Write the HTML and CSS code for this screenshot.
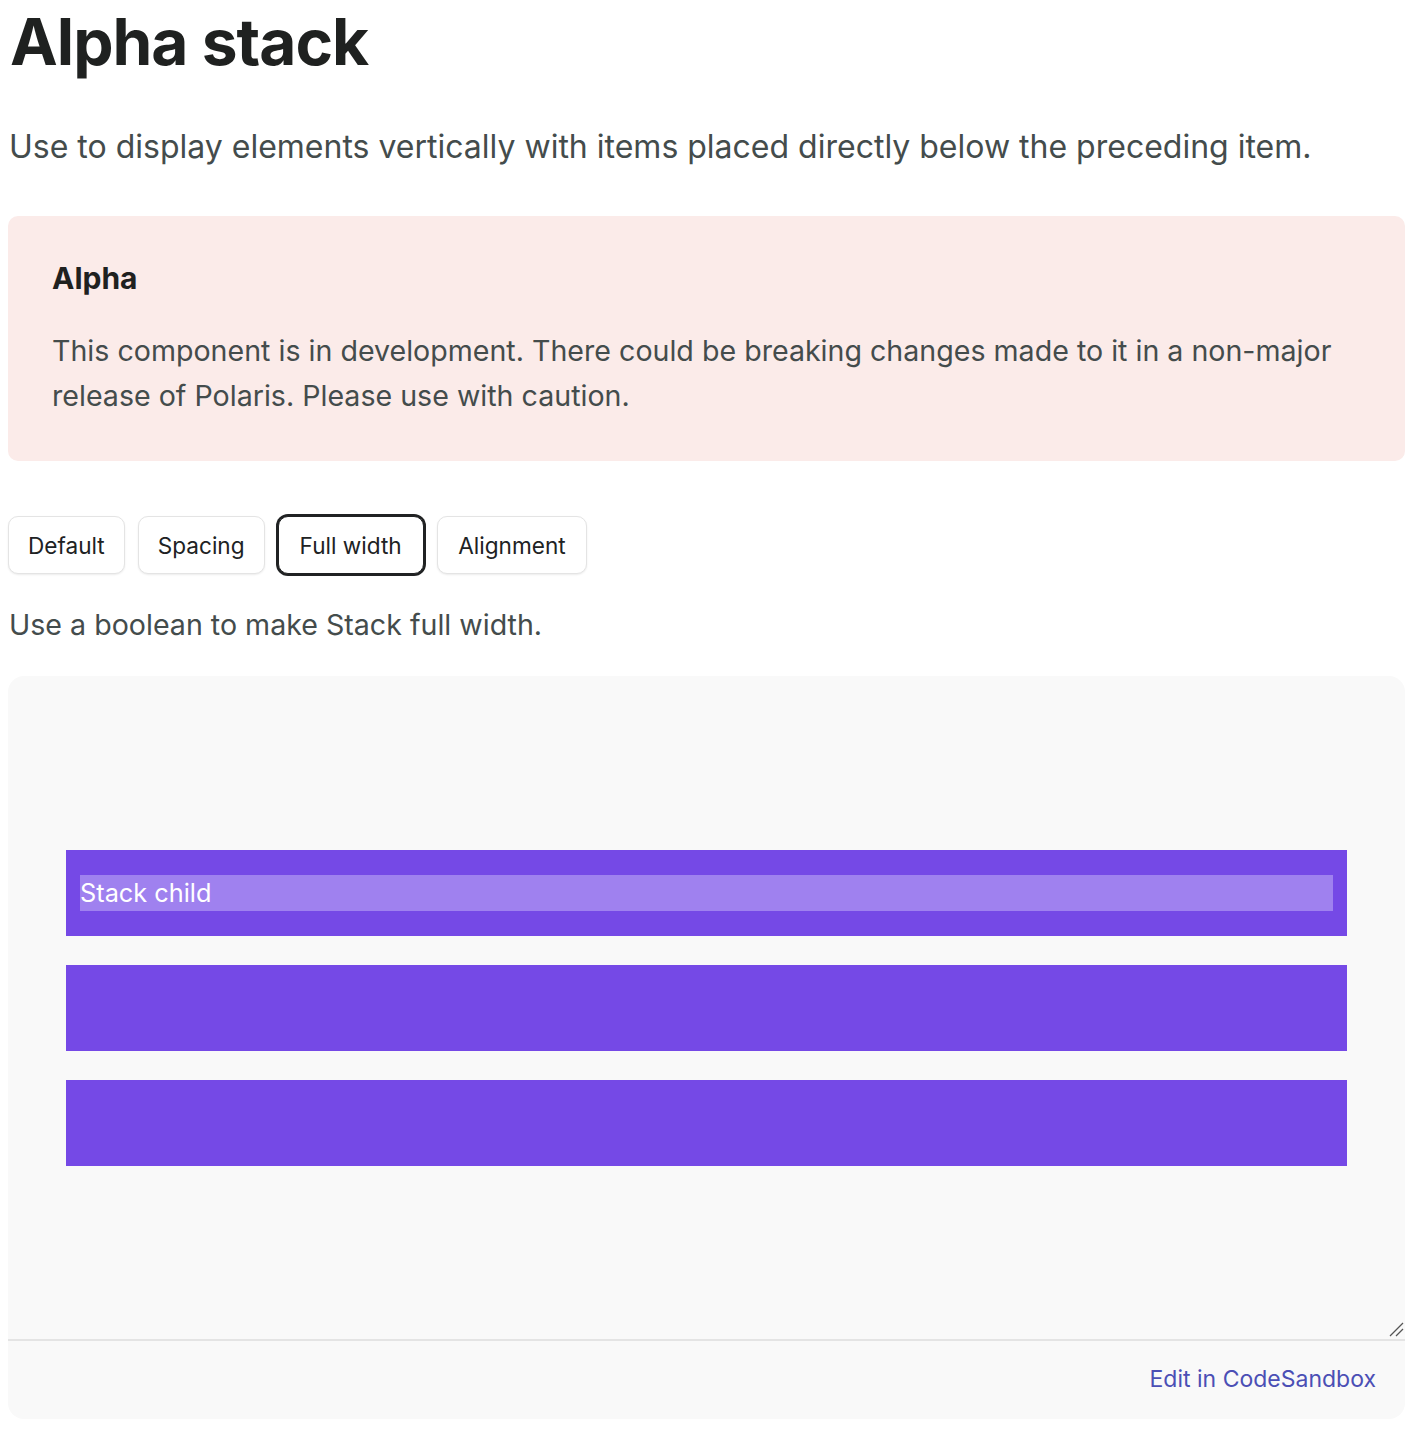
FILE: index.html
```html
<!DOCTYPE html>
<html lang="en">
<head>
  <meta charset="UTF-8" />
  <meta name="viewport" content="width=device-width, initial-scale=1.0"/>
  <title>Alpha stack</title>
  <link rel="stylesheet" href="styles.css">
</head>
<body>
  <h1 class="page-title">Alpha stack</h1>
  <p class="lede">Use to display elements vertically with items placed directly below the preceding item.</p>

  <div class="status-banner">
    <h3>Alpha</h3>
    <p>This component is in development. There could be breaking changes made to it in a non-major release of Polaris. Please use with caution.</p>
  </div>

  <div class="tabs">
    <button class="tab">Default</button>
    <button class="tab">Spacing</button>
    <button class="tab tab-active">Full width</button>
    <button class="tab">Alignment</button>
  </div>

  <p class="example-desc">Use a boolean to make Stack full width.</p>

  <div class="example">
    <div class="example-frame">
      <div class="stack">
        <div class="stack-child"><span class="child-label">Stack child</span></div>
        <div class="stack-child"></div>
        <div class="stack-child"></div>
      </div>
      <svg class="resize-handle" width="15" height="15" viewBox="0 0 15 15">
        <line x1="1" y1="14" x2="14" y2="1" stroke="#555" stroke-width="1.3"/>
        <line x1="7" y1="14" x2="14" y2="7" stroke="#555" stroke-width="1.3"/>
      </svg>
    </div>
    <div class="example-footer">
      <a href="#" class="sandbox-link">Edit in CodeSandbox</a>
    </div>
  </div>
</body>
</html>
```

FILE: styles.css
```css
body {
  font-family: 'Inter', 'Liberation Sans', sans-serif;
  margin: 0;
  padding: 0 9px 0 8px;
  background: #fff;
  color: #202223;
}

.page-title {
  font-size: 64px;
  font-weight: 700;
  letter-spacing: -1px;
  line-height: 84px;
  margin: 0 0 0 2px;
  color: #1f2120;
}

.lede {
  font-size: 32px;
  line-height: 44px;
  color: #444c4c;
  margin: 41px 0 0 1px;
}

.status-banner {
  background: #fbebe9;
  border-radius: 10px;
  padding: 40px 44px 43px;
  margin-top: 47px;
}

.status-banner h3 {
  font-size: 30px;
  font-weight: 700;
  line-height: 44px;
  margin: 0;
  color: #1f2120;
}

.status-banner p {
  font-size: 28.6px;
  line-height: 45px;
  color: #444c4c;
  margin: 28px 0 0;
}

.tabs {
  display: flex;
  align-items: center;
  gap: 13px;
  margin-top: 55px;
}

.tab {
  font-family: inherit;
  font-size: 22.6px;
  color: #202223;
  background: #fff;
  border: 1px solid #e4e4e4;
  border-radius: 10px;
  box-shadow: 0 1px 2px rgba(0, 0, 0, 0.08);
  padding: 0 19px;
  height: 58px;
}

.tab-active {
  border-color: #202223;
  box-shadow: 0 0 0 2px #202223;
  padding: 0 21px;
}

.tab:last-child {
  padding: 0 20.5px;
}

.example-desc {
  font-size: 28.6px;
  line-height: 40px;
  color: #444c4c;
  margin: 31px 0 0 1px;
}

.example {
  background: #f9f9f9;
  border-radius: 16px;
  margin-top: 31px;
  overflow: hidden;
}

.example-frame {
  position: relative;
  height: 663px;
  display: flex;
  align-items: center;
  padding: 0 58px;
  border-bottom: 2px solid #e4e4e4;
}

.stack {
  display: flex;
  flex-direction: column;
  gap: 29px;
  width: 100%;
}

.stack-child {
  background: #7549e6;
  height: 86px;
  padding: 25px 14px;
  box-sizing: border-box;
}

.child-label {
  display: block;
  background: #9f81ef;
  color: #fff;
  font-size: 25.3px;
  line-height: 36px;
}

.resize-handle {
  position: absolute;
  right: 1px;
  bottom: 2px;
}

.example-footer {
  display: flex;
  justify-content: flex-end;
  padding: 24px 29px 26px;
}

.sandbox-link {
  color: #4b4fb5;
  font-size: 23px;
  line-height: 28px;
  text-decoration: none;
}
```
